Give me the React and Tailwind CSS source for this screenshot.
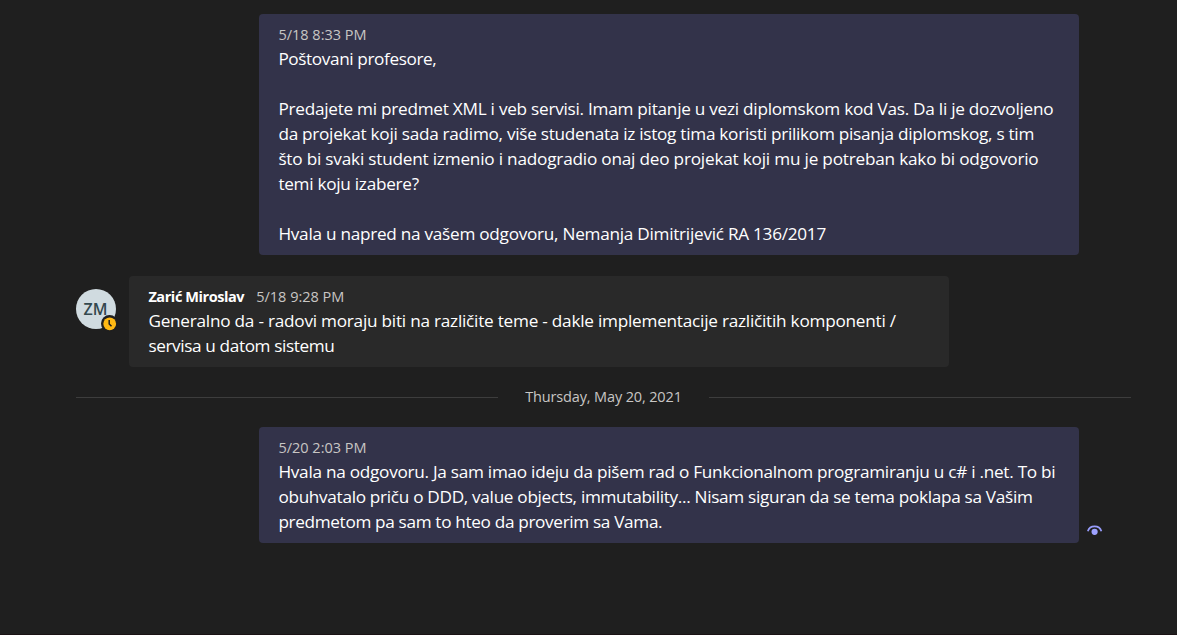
import React from 'react';

function Line({ className = '', children }) {
  return <p className={`h-[25px] whitespace-nowrap ${className}`}>{children}</p>;
}

function Bubble({ className = '', header, children }) {
  return (
    <article className={`w-[820px] rounded-[4px] pt-[10px] pr-4 pb-[9px] pl-[19.4px] ${className}`}>
      <header className="flex h-[22px] items-center gap-[12px] text-[14.5px] leading-[22px] whitespace-nowrap text-[#c8c6c4]">
        {header}
      </header>
      <div className="text-[17.2px] leading-[25px] text-white">{children}</div>
    </article>
  );
}

function Time({ children }) {
  return <time>{children}</time>;
}

function AwayBadge() {
  return (
    <svg viewBox="0 0 17 17" className="absolute -right-[2px] -bottom-[3px] size-[17px]" aria-hidden="true">
      <circle cx="8.5" cy="8.5" r="8.5" fill="#1f1f1f" />
      <circle cx="8.7" cy="8.8" r="6.4" fill="#ffb914" />
      <path d="M8.2 5v4l2.3 2.3" fill="none" stroke="#1f1f1f" strokeWidth="1.5" />
    </svg>
  );
}

function SeenIcon() {
  return (
    <svg viewBox="0 0 16 10" className="mb-[8px] ml-2 h-[10px] w-4" aria-label="Seen">
      <path d="M0.8 6.2C1.8 3 4.6 1.3 7.6 1.3S13.4 3 14.4 6.2" fill="none" stroke="#979cfb" strokeWidth="1.7" />
      <circle cx="7.6" cy="6.8" r="3.1" fill="#9ea2ff" />
    </svg>
  );
}

export default function App() {
  return (
    <main className="flex h-[635px] w-[1177px] flex-col overflow-hidden border-b border-[#1a1214] bg-[#1f1f1f] pt-[14px] pr-[46px] pl-[76px] font-['Open_Sans','Noto_Sans',sans-serif]">
      <div className="flex pl-[183px]">
        <Bubble className="bg-[#33334a]" header={<Time>5/18 8:33 PM</Time>}>
          <Line className="tracking-[-0.39px]">Poštovani profesore,</Line>
          <Line />
          <Line className="tracking-[-0.26px]">Predajete mi predmet XML i veb servisi. Imam pitanje u vezi diplomskom kod Vas. Da li je dozvoljeno</Line>
          <Line className="tracking-[-0.28px]">da projekat koji sada radimo, više studenata iz istog tima koristi prilikom pisanja diplomskog, s tim</Line>
          <Line className="tracking-[-0.21px]">što bi svaki student izmenio i nadogradio onaj deo projekat koji mu je potreban kako bi odgovorio</Line>
          <Line className="tracking-[-0.28px]">temi koju izabere?</Line>
          <Line />
          <Line className="tracking-[-0.27px]">Hvala u napred na vašem odgovoru, Nemanja Dimitrijević RA 136/2017</Line>
        </Bubble>
      </div>

      <div className="mt-[21px] flex gap-[13px]">
        <div className="relative mt-[13px] flex size-10 shrink-0 items-center justify-center rounded-full bg-[#d0dbe0] pr-px text-[16px] font-semibold text-[#33484e]">
          ZM
          <AwayBadge />
        </div>
        <Bubble
          className="bg-[#292929]"
          header={
            <>
              <span className="font-bold tracking-[-0.42px] text-white">Zarić Miroslav</span>
              <Time>5/18 9:28 PM</Time>
            </>
          }
        >
          <Line className="tracking-[-0.24px]">Generalno da - radovi moraju biti na različite teme - dakle implementacije različitih komponenti /</Line>
          <Line className="tracking-[-0.38px]">servisa u datom sistemu</Line>
        </Bubble>
      </div>

      <div className="mt-5 flex h-5 items-center">
        <div className="h-px w-[422px] bg-[#3d3d3d]" />
        <div className="flex-1 text-center text-[14.5px] leading-5 tracking-[-0.14px] whitespace-nowrap text-[#c8c6c4]">Thursday, May 20, 2021</div>
        <div className="h-px w-[422px] bg-[#3d3d3d]" />
      </div>

      <div className="mt-5 flex items-end pl-[183px]">
        <Bubble className="shrink-0 bg-[#33334a]" header={<Time>5/20 2:03 PM</Time>}>
          <Line className="tracking-[-0.27px]">Hvala na odgovoru. Ja sam imao ideju da pišem rad o Funkcionalnom programiranju u c# i .net. To bi</Line>
          <Line className="tracking-[-0.31px]">obuhvatalo priču o DDD, value objects, immutability... Nisam siguran da se tema poklapa sa Vašim</Line>
          <Line className="tracking-[-0.34px]">predmetom pa sam to hteo da proverim sa Vama.</Line>
        </Bubble>
        <SeenIcon />
      </div>
    </main>
  );
}
